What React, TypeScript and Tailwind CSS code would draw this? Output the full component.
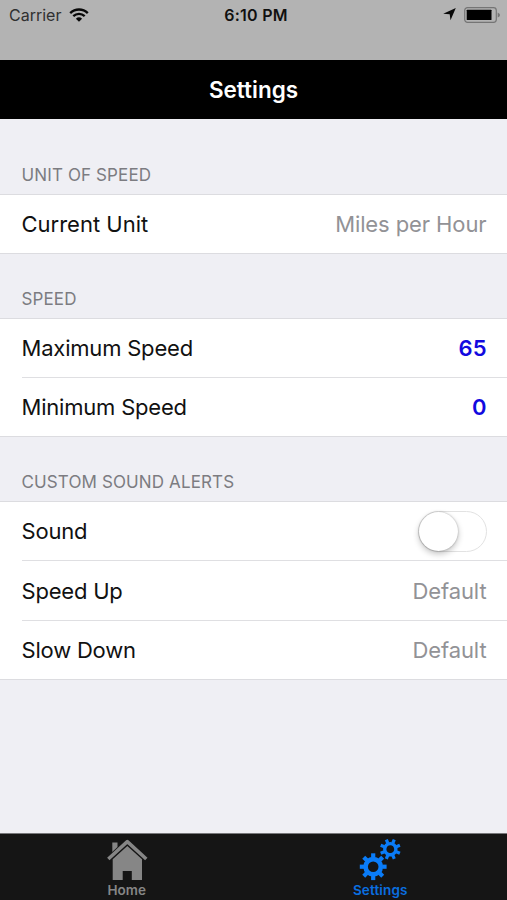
import React, { FC, ReactNode } from 'react'

const TEETH = [0, 45, 90, 135, 180, 225, 270, 315]

const WifiIcon: FC = () => (
  <svg width="20" height="14" viewBox="0 0 20 14" fill="none" stroke="#080808">
    <path d="M1.2 5.1C6.2 0.2 13.8 0.2 18.8 5.1" strokeWidth="2.4" />
    <path d="M4.3 8.2C7.6 5 12.4 5 15.7 8.2" strokeWidth="2.3" />
    <path d="M6.9 10.7Q10 7.8 13.1 10.7L10 13.8Z" fill="#080808" stroke="none" />
  </svg>
)

const LocationIcon: FC = () => (
  <svg width="13" height="13" viewBox="0 0 13 13" fill="#080808">
    <path d="M12.8 0L7.5 12.3L6.7 6.3L0.2 5.7Z" />
  </svg>
)

const BatteryIcon: FC = () => (
  <svg width="37" height="16" viewBox="0 0 37 16" fill="none">
    <rect x="0.7" y="0.7" width="31.6" height="14.6" rx="2.8" stroke="#757575" strokeWidth="1.2" />
    <rect x="2.7" y="2.7" width="24.8" height="10.3" rx="0.6" fill="#000" />
    <path d="M33.7 5.4Q36 6.4 36 8T33.7 10.6Z" fill="#757575" />
  </svg>
)

const HomeIcon: FC = () => (
  <svg width="42" height="42" viewBox="0 0 42 42" fill="#868686">
    <path d="M6.3 3.5H11.5V8L6.3 13Z" />
    <path
      d="M2.3 20L21.3 2.6L40.3 20"
      fill="none"
      stroke="#868686"
      strokeWidth="3.5"
      strokeLinejoin="round"
    />
    <path d="M6.7 20.2L21.3 7L36 20.2V41H25.8V32H16.7V41H6.7Z" />
  </svg>
)

const GearsIcon: FC = () => (
  <svg width="42" height="42" viewBox="0 0 42 42" fill="none" stroke="#0a7cf8">
    <g transform="translate(14.2 27.7)">
      <circle r="7.6" strokeWidth="4.6" />
      {TEETH.map((angle) => (
        <path key={angle} d="M0 -9V-13.4" strokeWidth="4.2" transform={`rotate(${angle})`} />
      ))}
    </g>
    <g transform="translate(31.3 10.2) rotate(22.5)">
      <circle r="5.6" strokeWidth="3.4" />
      {TEETH.map((angle) => (
        <path key={angle} d="M0 -6.5V-10.4" strokeWidth="3.2" transform={`rotate(${angle})`} />
      ))}
    </g>
  </svg>
)

const StatusBar: FC = () => (
  <div className="h-[60px] shrink-0 bg-[#b3b3b3] grid grid-cols-3 items-start text-base">
    <div className="flex items-center gap-2 h-[29px] pl-[9px] text-[#303030]">
      <span>Carrier</span>
      <WifiIcon />
    </div>
    <div className="h-[30px] leading-[30px] text-center font-semibold text-[#101010] tracking-[0.25px] pl-[5px]">
      6:10 PM
    </div>
    <div className="flex items-center justify-end gap-2 h-[29px] pr-[6px]">
      <LocationIcon />
      <BatteryIcon />
    </div>
  </div>
)

const Section: FC<{ title: string; headerClass: string; children: ReactNode }> = ({
  title,
  headerClass,
  children,
}) => (
  <section>
    <h2
      className={`flex items-end pl-[21.5px] pb-[7px] text-[17px] leading-6 text-[#7c7c81] tracking-[0.12px] ${headerClass}`}
    >
      {title}
    </h2>
    <div className="bg-white border-y border-[#dcdce0]">{children}</div>
  </section>
)

const Row: FC<{ label: string; rowClass: string; labelClass?: string; children: ReactNode }> = ({
  label,
  rowClass,
  labelClass = 'tracking-[-0.2px]',
  children,
}) => (
  <div className="pl-[21.5px]">
    <div
      className={`flex items-center justify-between pr-[20.5px] text-[22px] leading-7 border-[#dfdfe2] ${rowClass}`}
    >
      <span className={`text-[#111] ${labelClass}`}>{label}</span>
      {children}
    </div>
  </div>
)

const Value: FC<{ children: ReactNode }> = ({ children }) => (
  <span className="text-[#929296] tracking-[-0.1px]">{children}</span>
)

const SpeedValue: FC<{ children: ReactNode }> = ({ children }) => (
  <span className="text-[#1209df] font-semibold">{children}</span>
)

const Switch: FC = () => (
  <div className="w-[69px] h-[41px] rounded-full border-[1.5px] border-[#e2e2e2] bg-white">
    <div className="size-[39px] rounded-full bg-white shadow-[0_3px_6px_rgba(0,0,0,0.24),0_0_2px_rgba(0,0,0,0.3)]" />
  </div>
)

const App: FC = () => (
  <div className="w-[507px] h-[900px] flex flex-col overflow-hidden bg-[#efeff4] font-['Inter','Liberation_Sans',sans-serif]">
    <StatusBar />
    <h1 className="h-[59px] shrink-0 bg-black text-white text-center text-[22.5px] leading-[60px] font-semibold">
      Settings
    </h1>
    <main className="flex-1">
      <Section title="UNIT OF SPEED" headerClass="h-[75px]">
        <Row label="Current Unit" rowClass="h-[58px]" labelClass="tracking-[0px]">
          <Value>Miles per Hour</Value>
        </Row>
      </Section>
      <Section title="SPEED" headerClass="h-[64px]">
        <Row label="Maximum Speed" rowClass="h-[58px]">
          <SpeedValue>65</SpeedValue>
        </Row>
        <Row label="Minimum Speed" rowClass="h-[59px] border-t">
          <SpeedValue>0</SpeedValue>
        </Row>
      </Section>
      <Section title="CUSTOM SOUND ALERTS" headerClass="h-[64px]">
        <Row label="Sound" rowClass="h-[58px]">
          <Switch />
        </Row>
        <Row label="Speed Up" rowClass="h-[60px] border-t">
          <Value>Default</Value>
        </Row>
        <Row label="Slow Down" rowClass="h-[59px] border-t">
          <Value>Default</Value>
        </Row>
      </Section>
    </main>
    <nav className="h-[67px] shrink-0 grid grid-cols-2 bg-[#151515] border-t border-[#77777a] text-[13.5px] leading-4 font-semibold">
      <div className="flex flex-col items-center pt-[5px] text-[#868686]">
        <HomeIcon />
        <span className="mt-px">Home</span>
      </div>
      <div className="flex flex-col items-center pt-[5px] text-[#0a6fe0]">
        <GearsIcon />
        <span className="mt-px tracking-[0.15px]">Settings</span>
      </div>
    </nav>
  </div>
)

export default App
